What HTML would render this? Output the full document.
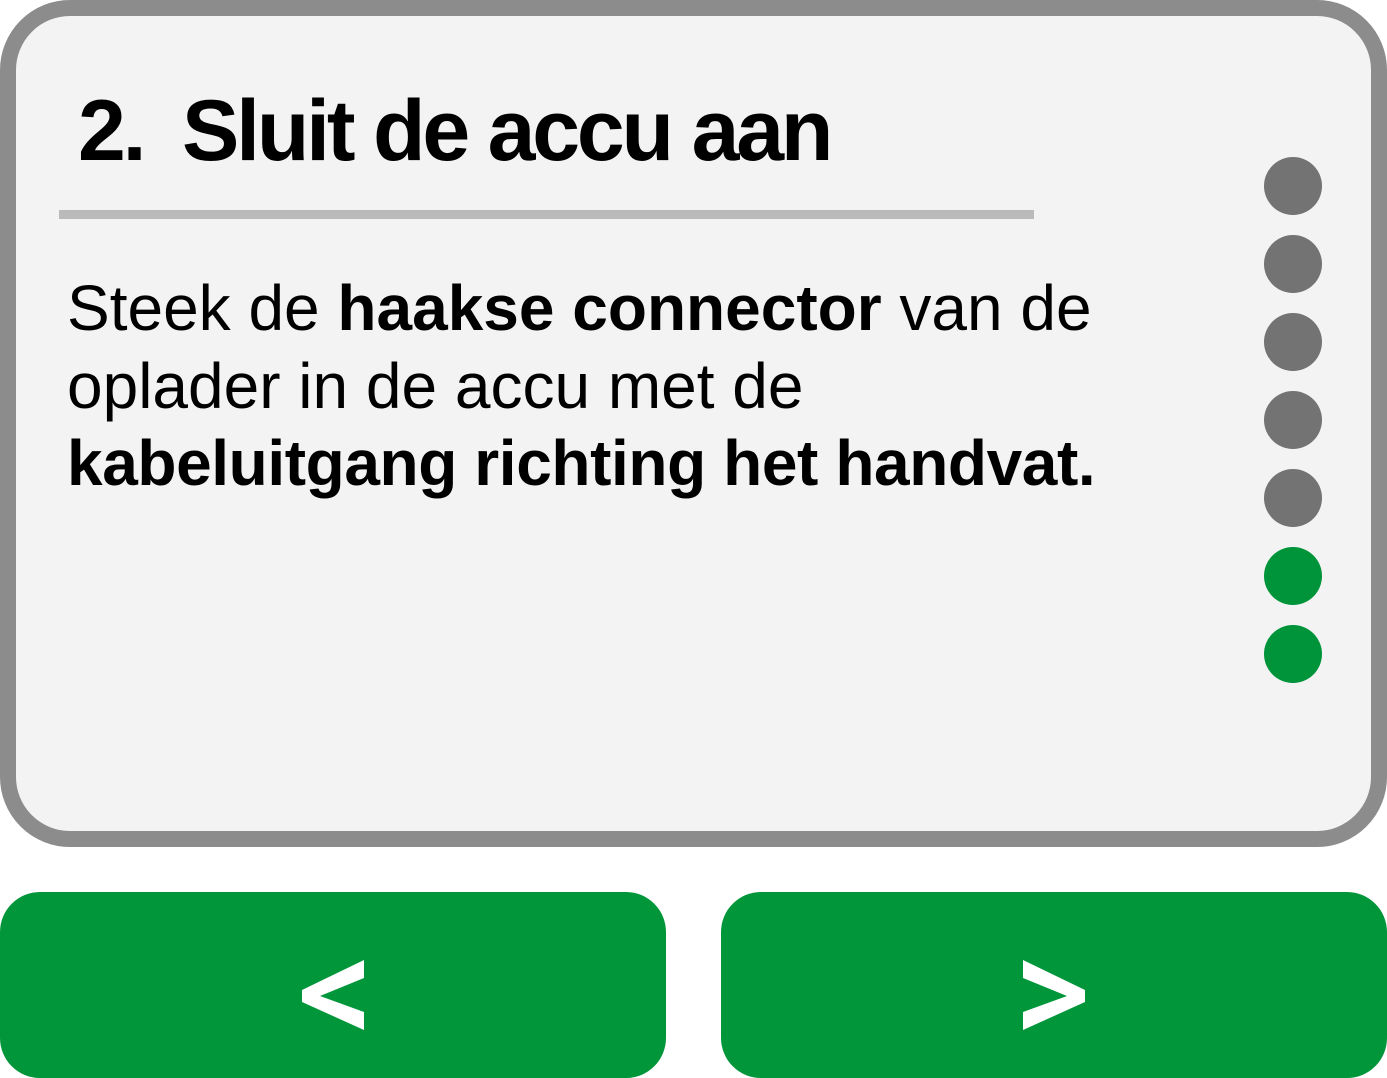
<!DOCTYPE html>
<html><head><meta charset="utf-8"><style>
html,body{margin:0;padding:0;width:1387px;height:1078px;background:#fff;overflow:hidden;font-family:"Liberation Sans",sans-serif;}
.card{position:absolute;left:0;top:0;width:1355px;height:815px;border:16px solid #8c8c8c;border-radius:70px;background:#f3f3f3;}
.t{position:absolute;font-weight:bold;font-size:86px;color:#000;line-height:1;white-space:nowrap;letter-spacing:-3.2px;}
.div{position:absolute;left:59px;top:210px;width:975px;height:9px;background:#bababa;}
.body{position:absolute;left:67px;top:270px;font-size:64px;line-height:77.5px;color:#000;white-space:nowrap;}
.dot{position:absolute;left:1264px;width:58px;height:58px;border-radius:50%;background:#737373;}
.g{background:#00943a;}
.btn{position:absolute;top:892px;width:666px;height:186px;border-radius:40px;background:#009639;}
</style></head><body>
<div class="card"></div>
<div class="t" style="left:78px;top:88px;">2.</div>
<div class="t" style="left:182px;top:88px;">Sluit de accu aan</div>
<div class="div"></div>
<div class="body">Steek de <b>haakse connector</b> van de<br>oplader in de accu met de<br><b style="letter-spacing:-0.4px">kabeluitgang richting het handvat.</b></div>
<div class="dot" style="top:157px"></div>
<div class="dot" style="top:235px"></div>
<div class="dot" style="top:313px"></div>
<div class="dot" style="top:391px"></div>
<div class="dot" style="top:469px"></div>
<div class="dot g" style="top:547px"></div>
<div class="dot g" style="top:625px"></div>
<div class="btn" style="left:0"></div>
<div class="btn" style="left:721px"></div>
<svg style="position:absolute;left:0;top:0" width="1387" height="1078">
<polygon fill="#fff" points="364,960 302,990 302,1002 364,1030 364,1012 320,996 364,978"/>
<polygon fill="#fff" points="1023,960 1085,990 1085,1002 1023,1030 1023,1012 1067,996 1023,978"/>
</svg>
</body></html>
